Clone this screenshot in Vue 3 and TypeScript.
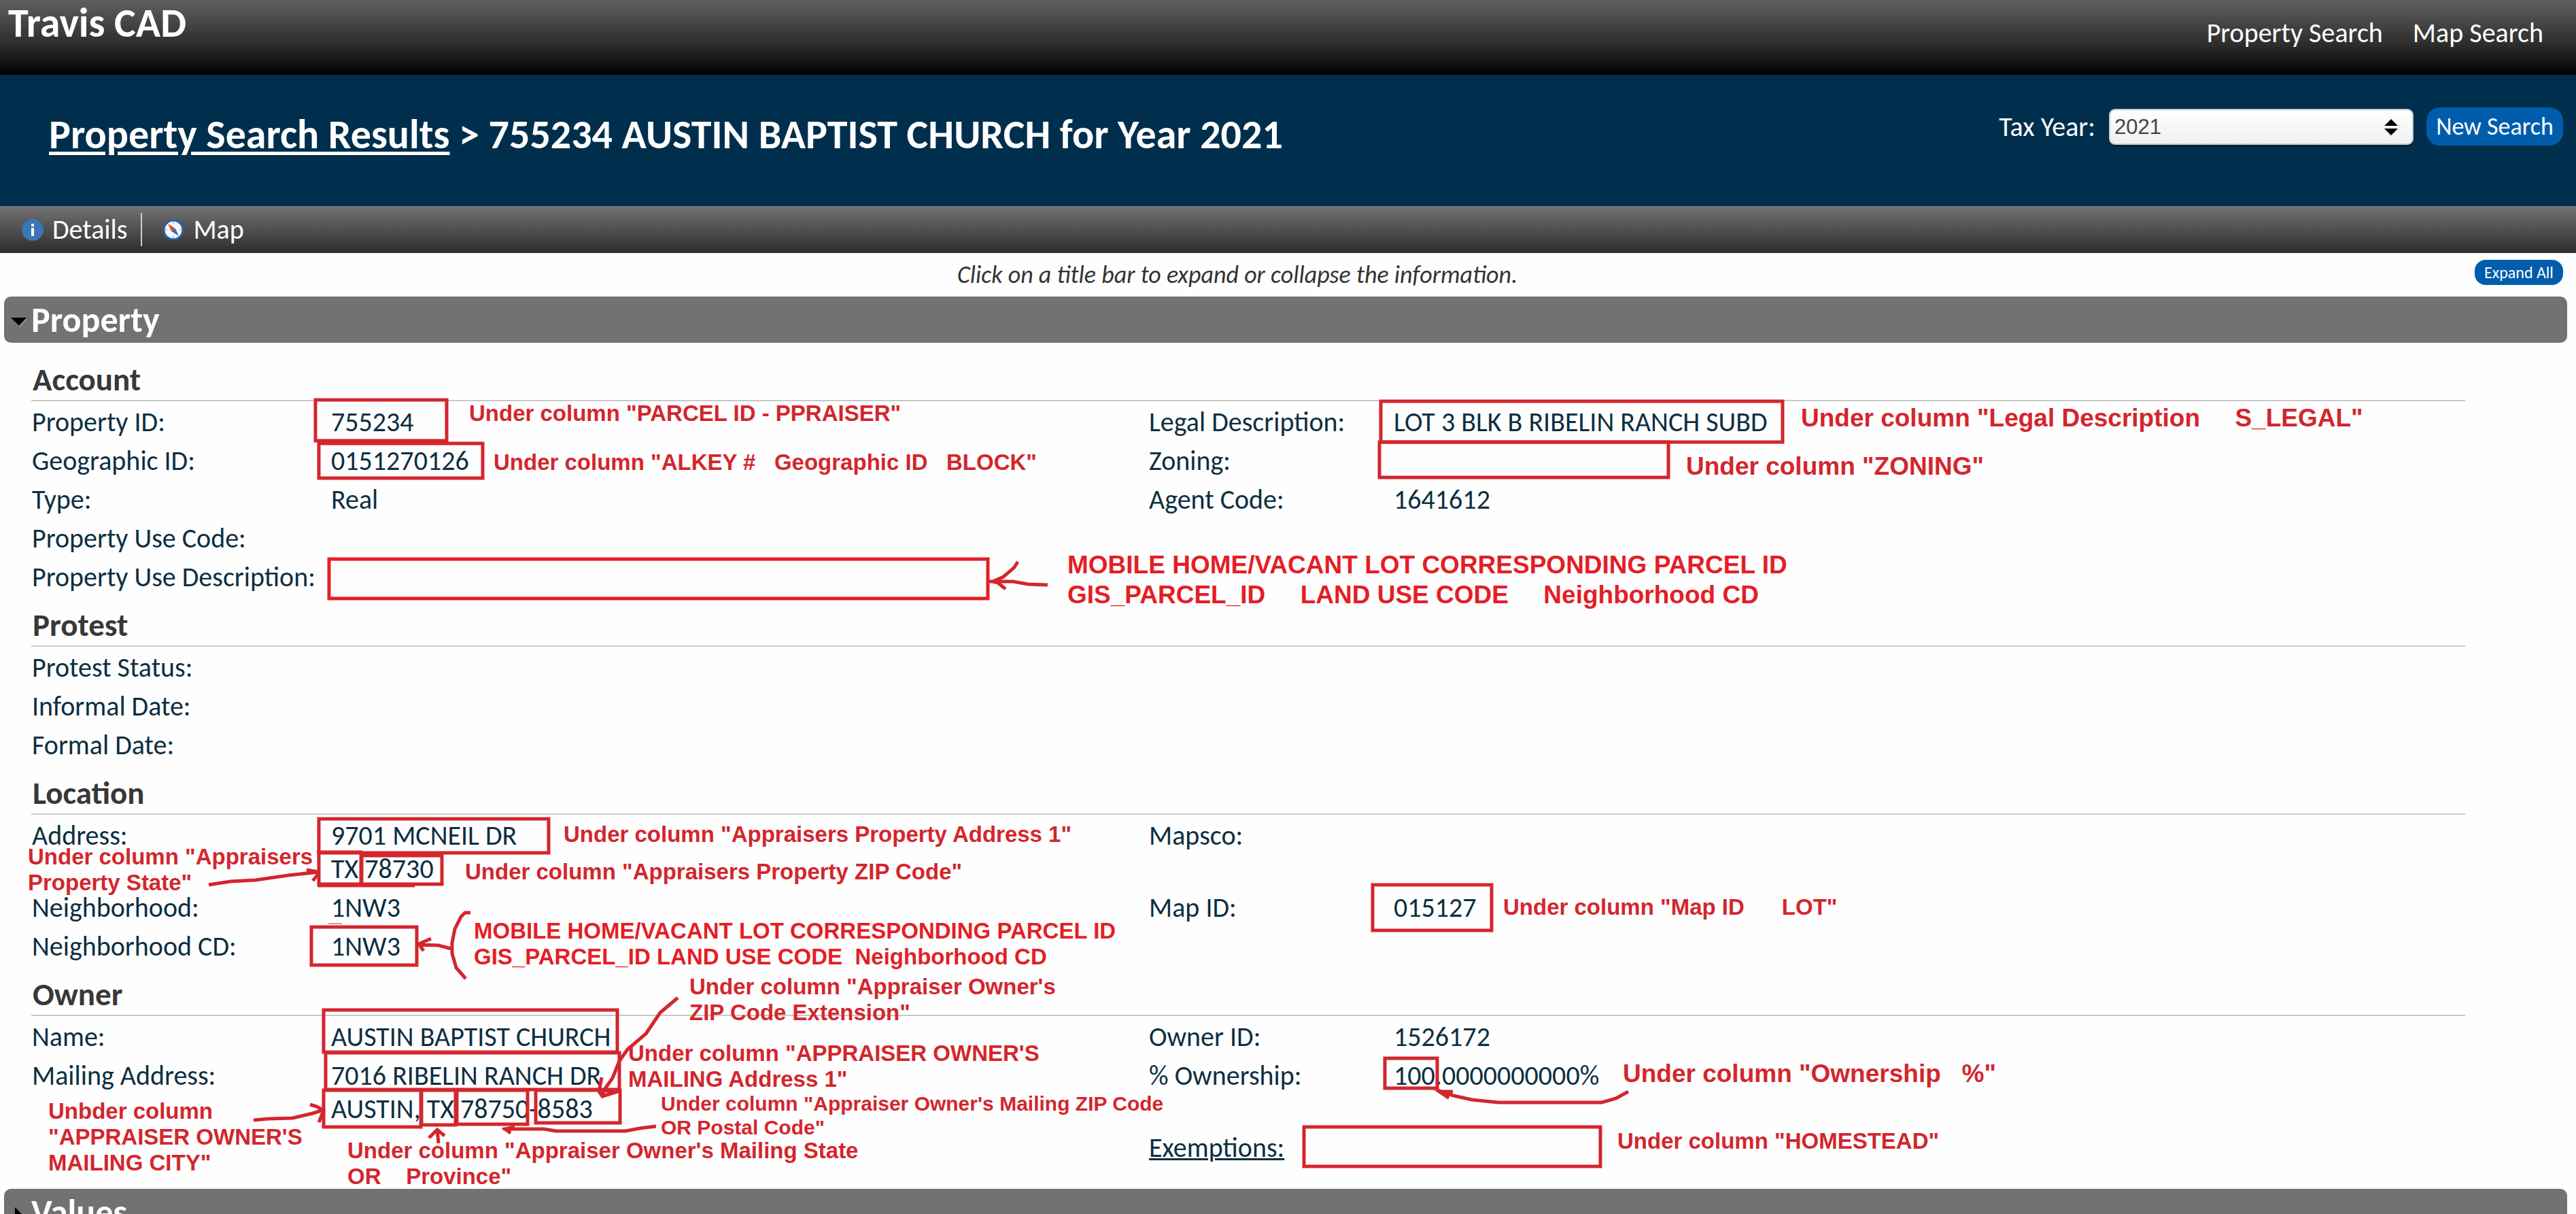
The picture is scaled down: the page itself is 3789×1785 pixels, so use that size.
<script setup lang="ts">
import { computed, ref } from 'vue'

interface Field { label: string; lines: string[]; link?: boolean }
interface Row { left?: Field; right?: Field }
interface Section { title: string; rows: Row[] }
interface Note { x: number; baseline: number; size: 's' | 'm' | 'l'; bright?: boolean; text: string }
interface Box { x: number; y: number; r: number; b: number; bright?: boolean }

const years = ['2021', '2020', '2019']
const year = ref('2021')

const f = (label: string, ...lines: string[]): Field => ({ label, lines })

const sections: Section[] = [
  {
    title: 'Account',
    rows: [
      { left: f('Property ID:', '755234'), right: f('Legal Description:', 'LOT 3 BLK B RIBELIN RANCH SUBD') },
      { left: f('Geographic ID:', '0151270126'), right: f('Zoning:') },
      { left: f('Type:', 'Real'), right: f('Agent Code:', '1641612') },
      { left: f('Property Use Code:') },
      { left: f('Property Use Description:') },
    ],
  },
  {
    title: 'Protest',
    rows: [{ left: f('Protest Status:') }, { left: f('Informal Date:') }, { left: f('Formal Date:') }],
  },
  {
    title: 'Location',
    rows: [
      { left: f('Address:', '9701 MCNEIL DR', 'TX 78730'), right: f('Mapsco:') },
      { left: f('Neighborhood:', '1NW3'), right: f('Map ID:', '015127') },
      { left: f('Neighborhood CD:', '1NW3') },
    ],
  },
  {
    title: 'Owner',
    rows: [
      { left: f('Name:', 'AUSTIN BAPTIST CHURCH'), right: f('Owner ID:', '1526172') },
      {
        left: f('Mailing Address:', '7016 RIBELIN RANCH DR', 'AUSTIN, TX 78750-8583'),
        right: f('% Ownership:', '100.0000000000%'),
      },
      { right: { label: 'Exemptions:', lines: [], link: true } },
    ],
  },
]

const notes: Note[] = [
  { x: 690, baseline: 619, size: 'm', text: 'Under column "PARCEL ID - PPRAISER"' },
  { x: 726, baseline: 691, size: 'm', text: 'Under column "ALKEY #   Geographic ID   BLOCK"' },
  { x: 2649, baseline: 628, size: 'l', text: 'Under column "Legal Description     S_LEGAL"' },
  { x: 2480, baseline: 699, size: 'l', text: 'Under column "ZONING"' },
  {
    x: 1570, baseline: 844, size: 'l', bright: true,
    text: 'MOBILE HOME/VACANT LOT CORRESPONDING PARCEL ID\nGIS_PARCEL_ID     LAND USE CODE     Neighborhood CD',
  },
  { x: 829, baseline: 1238, size: 'm', text: 'Under column "Appraisers Property Address 1"' },
  { x: 41, baseline: 1271, size: 'm', text: 'Under column "Appraisers\nProperty State"' },
  { x: 684, baseline: 1293, size: 'm', text: 'Under column "Appraisers Property ZIP Code"' },
  {
    x: 697, baseline: 1380, size: 'm', bright: true,
    text: 'MOBILE HOME/VACANT LOT CORRESPONDING PARCEL ID\nGIS_PARCEL_ID LAND USE CODE  Neighborhood CD',
  },
  { x: 2211, baseline: 1345, size: 'm', text: 'Under column "Map ID      LOT"' },
  { x: 1014, baseline: 1462, size: 'm', text: 'Under column "Appraiser Owner\'s\nZIP Code Extension"' },
  { x: 924, baseline: 1560, size: 'm', text: 'Under column "APPRAISER OWNER\'S\nMAILING Address 1"' },
  { x: 972, baseline: 1633, size: 's', text: 'Under column "Appraiser Owner\'s Mailing ZIP Code\nOR Postal Code"' },
  { x: 71, baseline: 1645, size: 'm', text: 'Unbder column\n"APPRAISER OWNER\'S\nMAILING CITY"' },
  { x: 511, baseline: 1703, size: 'm', text: 'Under column "Appraiser Owner\'s Mailing State\nOR    Province"' },
  { x: 2387, baseline: 1592, size: 'l', text: 'Under column "Ownership   %"' },
  { x: 2379, baseline: 1689, size: 'm', text: 'Under column "HOMESTEAD"' },
]

// Distance from the top of the first line to its baseline, per note size.
const rise = { s: 28, m: 30, l: 35 }
const placedNotes = computed(() =>
  notes.map((n) => ({ ...n, style: { left: `${n.x}px`, top: `${n.baseline - rise[n.size]}px` } })),
)

const boxes: Box[] = [
  { x: 462, y: 586, r: 660, b: 651 },
  { x: 467, y: 650, r: 713, b: 706 },
  { x: 482, y: 820, r: 1456, b: 883, bright: true },
  { x: 2029, y: 588, r: 2625, b: 653 },
  { x: 2027, y: 648, r: 2457, b: 705 },
  { x: 467, y: 1202, r: 810, b: 1257 },
  { x: 467, y: 1251, r: 534, b: 1303 },
  { x: 530, y: 1256, r: 653, b: 1303 },
  { x: 456, y: 1361, r: 616, b: 1422 },
  { x: 474, y: 1483, r: 911, b: 1550 },
  { x: 477, y: 1546, r: 914, b: 1605 },
  { x: 474, y: 1601, r: 622, b: 1660 },
  { x: 618, y: 1601, r: 673, b: 1657 },
  { x: 670, y: 1601, r: 779, b: 1656 },
  { x: 786, y: 1601, r: 915, b: 1654 },
  { x: 2017, y: 1299, r: 2197, b: 1371 },
  { x: 2035, y: 1554, r: 2117, b: 1603 },
  { x: 1916, y: 1655, r: 2357, b: 1718 },
]

const strokes = [
  'M1451 855 L1490 855 L1512 859 L1541 860 M1497 826 L1492 834 L1483 842 L1476 848 L1460 855 L1468 857 L1479 866',
  'M467 1302 H610',
  'M307 1301 L339 1296 L376 1294 L424 1287 L470 1282 M451 1279 L468 1282 M460 1295 L470 1283',
  'M692 1342 L684 1342 L678 1348 L669 1366 L665 1386 L665 1402 L671 1423 L685 1439 M664 1395 L645 1390 L614 1389 M634 1380 L616 1388 L623 1398',
  'M997 1467 L971 1489 L950 1520 L923 1543 L911 1560 L901 1585 L889 1602 L886 1612 M885 1584 L881 1605 L886 1612 L911 1604 L890 1604',
  'M373 1647 L394 1645 L430 1644 L460 1637 L476 1632 M456 1624 L466 1627 L476 1633 L469 1650',
  'M645 1681 L643 1661 M631 1673 L643 1661 L654 1670',
  'M965 1656 L941 1659 L920 1663 L818 1663 L800 1660 L740 1660 M757 1657 L743 1660 L751 1666',
  'M2395 1605 L2377 1615 L2356 1621 L2204 1621 L2165 1617 L2138 1611 L2115 1603 M2137 1605 L2117 1605 L2129 1613 L2132 1606',
]
</script>

<template>
  <div class="page">
    <header class="topbar">
      <h1 class="brand">Travis CAD</h1>
      <nav class="topnav">
        <a href="#search">Property Search</a>
        <a href="#map-search">Map Search</a>
      </nav>
    </header>

    <div class="titlebar">
      <h2 class="crumbs">
        <a href="#results">Property Search Results</a> &gt; 755234 AUSTIN BAPTIST CHURCH for Year 2021
      </h2>
      <form class="yearform" @submit.prevent>
        <label for="tax-year">Tax Year:</label>
        <span class="picker">
          <select id="tax-year" v-model="year">
            <option v-for="y in years" :key="y">{{ y }}</option>
          </select>
          <svg class="updown" viewBox="0 0 20 24" aria-hidden="true">
            <path d="M10 0 L20 10 H0 Z M10 24 L20 14 H0 Z" />
          </svg>
        </span>
        <button class="pill big" type="button">New Search</button>
      </form>
    </div>

    <nav class="tabs">
      <a href="#details">
        <svg viewBox="0 0 32 32" aria-hidden="true">
          <circle cx="16" cy="16" r="16" fill="#3b76b5" />
          <path d="M14 7h4v4h-4z M14 13h4v12h-4z" fill="#fff" />
        </svg>
        Details
      </a>
      <a href="#map">
        <svg viewBox="0 0 32 32" aria-hidden="true">
          <circle cx="16" cy="16" r="14" fill="#f6f8fb" stroke="#2a5ea8" stroke-width="3" />
          <path d="M16 4v3 M16 25v3 M4 16h3 M25 16h3" stroke="#b9c4d6" stroke-width="2" />
          <path d="M8 7 L19 14 L13 18 Z" fill="#dd4b22" />
          <path d="M24 25 L19 14 L13 18 Z" fill="#2f6fb8" />
        </svg>
        Map
      </a>
    </nav>

    <div class="hint">
      <p>Click on a title bar to expand or collapse the information.</p>
      <button class="pill small" type="button">Expand All</button>
    </div>

    <main>
      <h2 class="bar">
        <svg viewBox="0 0 24 24" aria-hidden="true"><path d="M5 8 H26 L15 20 Z" fill="#999" /><path d="M2 6 H25 L14 18 Z" fill="#000" /></svg>
        Property
      </h2>
      <div class="body">
        <section v-for="s in sections" :key="s.title">
          <h3>{{ s.title }}</h3>
          <table>
            <colgroup><col class="c1" /><col class="c2" /><col class="c3" /><col /></colgroup>
            <tbody>
              <tr v-for="(row, i) in s.rows" :key="i">
                <template v-for="(cell, j) in [row.left, row.right]" :key="j">
                  <th v-if="cell" scope="row">
                    <a v-if="cell.link" href="#exemptions">{{ cell.label }}</a>
                    <template v-else>{{ cell.label }}</template>
                  </th>
                  <td v-else></td>
                  <td><div v-for="line in cell?.lines" :key="line">{{ line }}</div></td>
                </template>
              </tr>
            </tbody>
          </table>
        </section>
      </div>
      <h2 class="bar">
        <svg viewBox="0 0 24 24" aria-hidden="true"><path d="M8 2 L20 14 L8 26 Z" fill="#000" /></svg>
        Values
      </h2>
    </main>

    <div class="markup">
      <svg class="ink" aria-hidden="true">
        <rect
          v-for="(b, i) in boxes" :key="i" :class="{ bright: b.bright }"
          :x="b.x + 2" :y="b.y + 2" :width="b.r - b.x - 5" :height="b.b - b.y - 5"
        />
        <path v-for="d in strokes" :key="d" :d="d" />
        <path class="thin" d="M483 1358 H503" />
      </svg>
      <p v-for="n in placedNotes" :key="n.text + n.x" :class="['note', n.size, { bright: n.bright }]" :style="n.style">{{ n.text }}</p>
    </div>
  </div>
</template>

<style>
html {
  scrollbar-width: none;
}
body {
  background: #fefefe;
}
</style>

<style scoped>
.page {
  position: relative;
  overflow: hidden;
  font-family: Carlito, Calibri, Lato, sans-serif;
  font-size: 40px;
  line-height: 49px;
  color: #0d2f42;
}
h1, h2, h3, p {
  margin: 0;
}
a {
  color: inherit;
}
.topbar {
  display: flex;
  justify-content: space-between;
  height: 110px;
  padding: 0 48px 0 12px;
  box-sizing: border-box;
  background: linear-gradient(#606060, #2c2c2c 60%, #000);
  color: #fff;
}
.brand {
  font-size: 60px;
  line-height: 68px;
}
.topnav {
  display: flex;
  gap: 44px;
  padding-top: 24px;
}
.topnav a, .tabs a {
  text-decoration: none;
}
.titlebar {
  display: flex;
  justify-content: space-between;
  align-items: flex-start;
  height: 193px;
  padding: 48px 19px 0 72px;
  box-sizing: border-box;
  background: #002f4d;
  color: #fff;
}
.crumbs {
  font-size: 60px;
  line-height: 80px;
}
.crumbs a {
  text-decoration-thickness: 5px;
  text-underline-offset: 5px;
}
.yearform {
  display: flex;
  align-items: center;
}
.yearform label {
  margin-right: 20px;
}
.picker {
  position: relative;
  display: flex;
  margin-right: 19px;
}
.picker select {
  appearance: none;
  width: 448px;
  height: 53px;
  padding: 0 6px;
  border: 2px solid #c3cad3;
  border-radius: 9px;
  background: linear-gradient(#fff, #f0f0f0);
  font-family: "Liberation Sans", sans-serif;
  font-size: 31px;
  color: #444;
  box-shadow: 0 2px 3px rgba(0, 0, 0, 0.4);
}
.updown {
  position: absolute;
  right: 23px;
  top: 15px;
  width: 20px;
  height: 24px;
  pointer-events: none;
}
.pill {
  flex: none;
  padding: 0;
  border: 0;
  background: #005dab;
  font-family: inherit;
  color: #fff;
}
.pill.big {
  width: 201px;
  height: 56px;
  border-radius: 20px;
  font-size: 36px;
}
.pill.small {
  width: 130px;
  height: 37px;
  border-radius: 16px;
  font-size: 24px;
}
.tabs {
  display: flex;
  align-items: center;
  height: 69px;
  background: linear-gradient(#737373, #2c2c2c);
  color: #fff;
}
.tabs a {
  display: flex;
  align-items: center;
  gap: 13px;
  padding: 0 20px 0 32px;
}
.tabs a + a {
  padding-left: 30px;
  border-left: 2px solid #ccc;
}
.tabs svg {
  width: 32px;
  height: 32px;
}
.hint {
  display: flex;
  justify-content: flex-end;
  align-items: flex-start;
  height: 64px;
  padding: 10px 19px 0 0;
  box-sizing: border-box;
}
.hint p {
  flex: 1;
  margin-top: -2px;
  font-size: 36px;
  font-style: italic;
  color: #333;
  text-align: center;
}
.bar {
  display: flex;
  align-items: center;
  height: 68px;
  margin: 0 13px 0 6px;
  border-radius: 10px;
  background: #727272;
  color: #fff;
  font-size: 52px;
}
.bar svg {
  width: 24px;
  height: 24px;
  margin: 6px 8px 0;
  overflow: visible;
}
.body {
  padding: 12px 163px 32px 46px;
}
h3 {
  padding: 18px 0 6px 2px;
  border-bottom: 2px solid #c8c8c8;
  font-size: 47px;
  line-height: 48px;
  color: #383838;
}
table {
  width: 100%;
  margin-top: 2px;
  table-layout: fixed;
  border-collapse: collapse;
}
.c1 {
  width: 441px;
}
.c2 {
  width: 1202px;
}
.c3 {
  width: 361px;
}
th, td {
  height: 49px;
  padding: 4px 0;
  vertical-align: top;
  text-align: left;
  font-weight: 400;
  white-space: nowrap;
}
th {
  padding-left: 1px;
}
th a {
  text-decoration-thickness: 3px;
}
.markup {
  position: absolute;
  inset: 0;
  pointer-events: none;
  color: #d3262d;
}
.ink {
  position: absolute;
  width: 100%;
  height: 100%;
  fill: none;
  stroke: #d3262d;
  stroke-width: 5;
}
.ink .thin {
  stroke-width: 1;
}
.ink .bright {
  stroke: #e41e26;
}
.note {
  position: absolute;
  font-family: "Liberation Sans", Arial, sans-serif;
  font-weight: 700;
  white-space: pre;
}
.note.s {
  font-size: 30px;
  line-height: 35px;
}
.note.m {
  font-size: 33px;
  line-height: 38px;
}
.note.l {
  font-size: 37px;
  line-height: 44px;
}
.note.bright {
  color: #e41e26;
}
</style>
